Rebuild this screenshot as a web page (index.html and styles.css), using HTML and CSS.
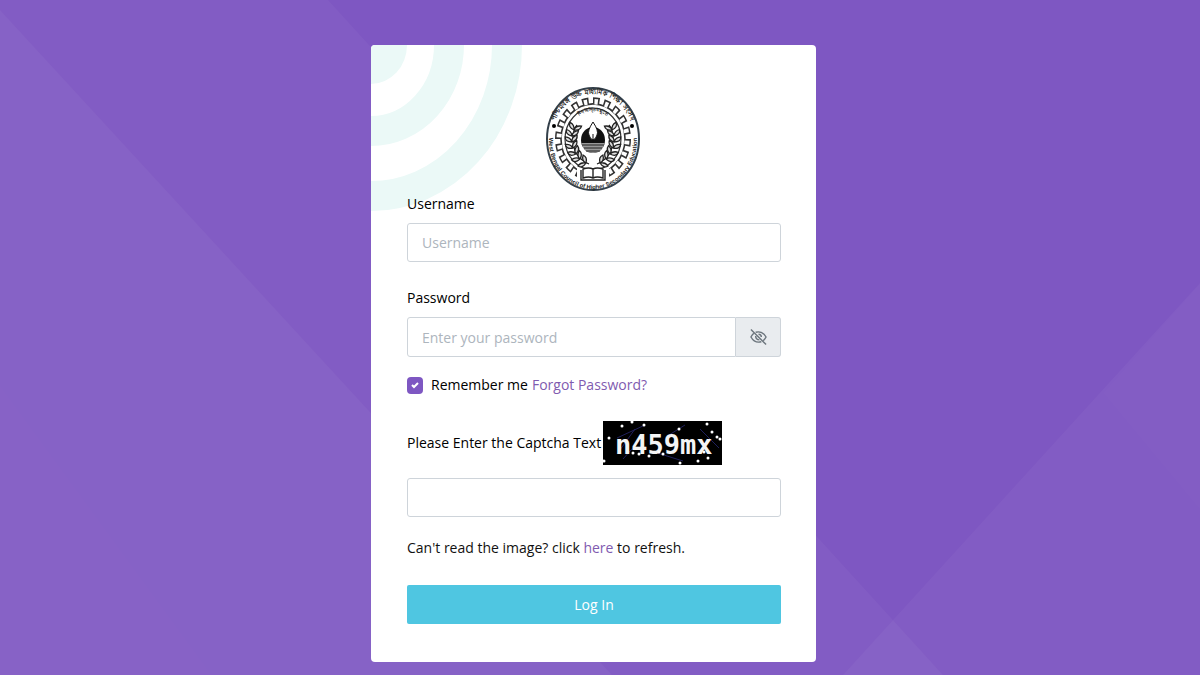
FILE: index.html
```html
<!DOCTYPE html>
<html lang="en">
<head>
<meta charset="utf-8">
<meta name="viewport" content="width=device-width, initial-scale=1">
<title>Log In</title>
<link rel="stylesheet" href="styles.css">
</head>
<body>
<svg class="backdrop" viewBox="0 0 1200 675" preserveAspectRatio="none" aria-hidden="true">
  <path class="shade" d="M0 10L612 675H0z"/>
  <path class="shade" d="M0 0H328L943 675H0z"/>
  <path class="shade" d="M1200 283V675H843z"/>
  <path class="faint" d="M0 385L212 675H0zM0 555L90 675H0zM1103 393L1200 510V283z"/>
</svg>
<main class="page">
  <form class="card">
    <svg class="rings" viewBox="0 0 151 166" aria-hidden="true">
      <ellipse rx="36" ry="39" fill="#ebf9f7"/>
      <ellipse rx="78" ry="86" class="ring"/>
      <ellipse rx="136" ry="151" class="ring"/>
    </svg>

    <svg class="emblem" viewBox="-48 -53 99 106" role="img" aria-label="West Bengal Council of Higher Secondary Education">
      <defs>
        <path id="arc-bottom" d="M-43 -8A44 48 0 1 0 43 -8"/>
        <path id="arc-top" d="M-38 -17A41 45 0 0 1 38 -17"/>
        <path id="arc-motto" d="M-22 -14A25 27 0 0 1 22 -14"/>
        <path id="leaf" d="M0 0Q-1 -5 -6 -6Q-7 -1 0 0Q6 -1 6 -6Q0 -5 0 0z"/>
        <g id="branch" stroke="#222" stroke-width="1.3" fill="#ddd">
          <path d="M-4 25Q-20 18 -20 0Q-20 -9 -16 -14" fill="none"/>
          <use href="#leaf" transform="translate(-7 24) rotate(-65)"/>
          <use href="#leaf" transform="translate(-13 20) rotate(-50)"/>
          <use href="#leaf" transform="translate(-17 15) rotate(-35)"/>
          <use href="#leaf" transform="translate(-20 9) rotate(-20)"/>
          <use href="#leaf" transform="translate(-21 3) rotate(-8)"/>
          <use href="#leaf" transform="translate(-21 -3) rotate(5)"/>
          <use href="#leaf" transform="translate(-19 -9) rotate(18)"/>
        </g>
      </defs>
      <ellipse rx="46" ry="51" fill="#fff" stroke="#34404a" stroke-width="2"/>
      <g transform="scale(1 1.1)" fill="none">
        <circle r="35" stroke="#333" stroke-width="6" pathLength="200" stroke-dasharray="6 4"/>
        <circle r="32" fill="#fff" stroke="#333" stroke-width="1.6"/>
        <circle r="34" stroke="#fff" stroke-width="5" pathLength="200" stroke-dasharray="3.2 6.8" stroke-dashoffset="-1.4"/>
        <circle r="28" fill="#fff" stroke="#333" stroke-width="1.2"/>
      </g>
      <use href="#branch"/>
      <use href="#branch" transform="scale(-1 1)"/>
      <ellipse cy="1" rx="12" ry="13" fill="#111"/>
      <path d="M-12 4H12Q9 14 0 14Q-9 14 -12 4z" fill="#999"/>
      <path d="M-11 6H11M-9 9H9M-7 12H7" stroke="#222"/>
      <path d="M0 -17Q6 -8 4 -4Q3 0 0 1Q-3 0 -4 -4Q-6 -8 0 -17z" fill="#fff" stroke="#111" stroke-width="1"/>
      <path d="M0 -5V4" stroke="#111" stroke-width="1"/>
      <path d="M-16 29H16V42H-16z" fill="#fff"/>
      <path d="M-10 30V39Q-4 37 0 39Q4 37 10 39V30Q4 28 0 30Q-4 28 -10 30zM0 30V39M-12 31V41H12V31" fill="#fff" stroke="#222" stroke-width="1.4"/>
      <circle cx="-39" cy="-13" r="2"/><circle cx="39" cy="-13" r="2"/>
      <text class="seal"><textPath href="#arc-bottom" startOffset="50%">West Bengal Council of Higher Secondary Education</textPath></text>
      <text class="seal seal-top"><textPath href="#arc-top" startOffset="50%">পশ্চিমবঙ্গ উচ্চ মাধ্যমিক শিক্ষা সংসদ</textPath></text>
      <text class="seal seal-motto"><textPath href="#arc-motto" startOffset="50%">বিদ্যয়ামৃতমশ্নুতে</textPath></text>
    </svg>

    <div class="field">
      <label for="username">Username</label>
      <input class="control" id="username" type="text" placeholder="Username">
    </div>

    <div class="field">
      <label for="password">Password</label>
      <div class="group">
        <input class="control" id="password" type="password" placeholder="Enter your password">
        <button class="reveal" type="button" aria-label="Show password">
          <svg viewBox="0 0 18 18" aria-hidden="true">
            <path d="M6 4Q13 2 17 9Q16 11 14 13M12 14Q5 16 1 9Q2 7 4 5"/>
            <path d="M6 8Q6 12 10 12M9 6Q12 6 12 9"/>
            <path d="M1 1L17 17"/>
          </svg>
        </button>
      </div>
    </div>

    <div class="remember">
      <input id="remember" type="checkbox" checked>
      <label for="remember">Remember me</label>
      <a href="#">Forgot Password?</a>
    </div>

    <div class="captcha">
      <label for="captcha">Please Enter the Captcha Text</label>
      <svg class="captcha-image" viewBox="0 0 119 44" role="img" aria-label="Captcha">
        <rect width="119" height="44"/>
        <path d="M14 17L42 4M14 33L32 8M20 38L36 20M48 30L80 40M97 8L116 27M66 14L82 4" fill="none" stroke="#20205c"/>
        <text x="12" y="33">n459mx</text>
        <path class="stars" d="M19 5h0M29 1h0M41 4h0M6 17h0M104 3h0M109 11h0M114 16h0M117 18h0M76 8h0M1 40h0M30 32h0M36 33h0M46 35h0M56 31h0M77 42h0M95 40h0M105 37h0M101 31h0M60 33h0"/>
      </svg>
    </div>
    <input class="control" id="captcha" type="text">

    <p class="refresh">Can't read the image? click <a href="#">here</a> to refresh.</p>
    <button class="submit" type="submit">Log In</button>
  </form>
</main>
</body>
</html>
```
FILE: styles.css
```css
* {
  box-sizing: border-box;
}

body {
  margin: 0;
  min-height: 100vh;
  background: #7e57c2;
  color: #111;
  font: 14px/22px "Open Sans", "Liberation Sans", sans-serif;
}

.backdrop {
  position: fixed;
  inset: 0;
  width: 100%;
  height: 100%;
  z-index: -1;
}

.shade {
  fill: rgba(255, 255, 255, 0.035);
}

.faint {
  fill: rgba(255, 255, 255, 0.006);
}

.page {
  display: flex;
  justify-content: center;
  padding: 45px 29px 12px 16px;
}

.card {
  position: relative;
  display: flex;
  flex-direction: column;
  width: 100%;
  max-width: 445px;
  padding: 41px 35px 38px 36px;
  border-radius: 4px;
  overflow: hidden;
  background: #fff;
}

.rings {
  position: absolute;
  top: 0;
  left: 0;
  width: 151px;
}

.ring {
  fill: none;
  stroke: #ebf9f7;
  stroke-width: 30px;
}

.emblem {
  position: relative;
  align-self: center;
  width: 99px;
  height: 106px;
  margin-bottom: 1px;
}

.seal {
  fill: #222;
  font: bold 6px "Liberation Sans", sans-serif;
  text-anchor: middle;
}

.seal-top {
  font-size: 7px;
}

.seal-motto {
  font-size: 5px;
}

.field {
  position: relative;
  display: flex;
  flex-direction: column;
  gap: 8px;
  margin-bottom: 25px;
}

label {
  color: #000;
  font-weight: 500;
}

.control {
  width: 100%;
  min-width: 0;
  height: 39px;
  padding: 0 14px;
  border: 1px solid #ced4da;
  border-radius: 3px;
  background: #fff;
  color: #111;
  font: inherit;
}

.control::placeholder {
  color: #adb5bd;
}

.group {
  display: flex;
}

.group .control {
  height: 40px;
  border-radius: 3px 0 0 3px;
}

.reveal {
  display: grid;
  place-items: center;
  flex: 0 0 45px;
  padding: 0;
  border: 1px solid #ced4da;
  border-left: 0;
  border-radius: 0 3px 3px 0;
  background: #e9ecef;
}

.reveal svg {
  width: 17px;
  height: 18px;
  fill: none;
  stroke: #6c757d;
  stroke-width: 1.5px;
}

.remember {
  display: flex;
  align-items: center;
  gap: 4px;
  margin: -8px 0 25px;
}

.remember input {
  appearance: none;
  width: 16px;
  height: 17px;
  margin: 0 4px 0 0;
  border-radius: 4px;
  background: #7e57c2 url("data:image/svg+xml,%3Csvg xmlns='http://www.w3.org/2000/svg' viewBox='0 0 16 16'%3E%3Cpath d='M5 8l2 2 4-4' fill='none' stroke='white' stroke-width='2'/%3E%3C/svg%3E") center / 16px no-repeat;
}

a {
  color: #7f5bb0;
  text-decoration: none;
}

.captcha {
  display: flex;
  align-items: center;
  gap: 2px;
  margin-bottom: 13px;
}

.captcha-image {
  width: 119px;
  height: 44px;
}

.captcha-image text {
  fill: #f4f4f4;
  font: bold 27px "DejaVu Sans Mono", monospace;
}

.stars {
  stroke: #fff;
  stroke-width: 3px;
  stroke-linecap: round;
}

.refresh {
  margin: 20px 0 26px;
}

.submit {
  height: 39px;
  border: 0;
  border-radius: 2px;
  background: #4fc6e1;
  color: #fff;
  font: inherit;
}
```
